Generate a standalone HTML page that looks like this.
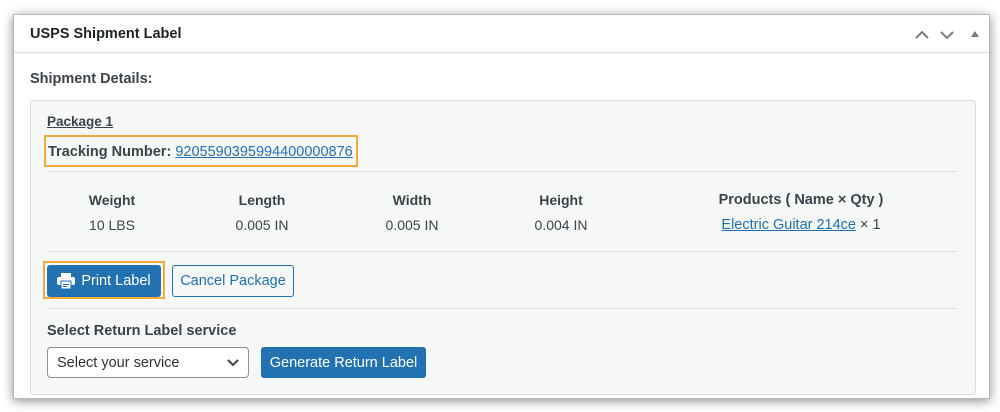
<!DOCTYPE html>
<html><head><meta charset="utf-8"><style>
*{margin:0;padding:0;box-sizing:border-box}
body{width:1000px;height:412px;background:#fff;font-family:"Liberation Sans",Arial,sans-serif;color:#1d2327;position:relative;overflow:hidden}
.a{position:absolute;white-space:nowrap}
.panel{position:absolute;left:13px;top:14px;width:977px;height:385px;background:#fff;border:1px solid #b8b9bc;box-shadow:0 2px 10px rgba(0,0,0,.45)}
.inner{position:absolute;left:30px;top:100px;width:946px;height:295px;background:#f6f7f7;border:1px solid #dcdcde;border-radius:4px}
.hr{position:absolute;left:47px;width:911px;height:1px;background:#dcdcde}
.c{position:absolute;text-align:center;width:150px;font-size:14px;color:#3c434a}
.b{font-weight:bold}
a{color:#2271b1;text-decoration:underline}
.btn{position:absolute;height:32px;border-radius:3px;font-size:14px;display:flex;align-items:center;justify-content:center}
</style></head><body>
<div class="panel"></div>
<div class="a" style="left:14px;top:52px;width:975px;height:1px;background:#dcdcde"></div>
<div class="a b" style="left:30px;top:26px;font-size:14.5px">USPS Shipment Label</div>
<svg class="a" style="left:913px;top:28px" width="70" height="14" viewBox="0 0 70 14">
<path d="M3 10 L9 4 L15 10" stroke="#787c82" stroke-width="2" fill="none"/>
<path d="M28 4 L34 10 L40 4" stroke="#787c82" stroke-width="2" fill="none"/>
<path d="M58 9 L62 3 L66 9 Z" fill="#787c82"/>
</svg>
<div class="a b" style="left:30px;top:71px;font-size:14.5px;color:#3c434a">Shipment Details:</div>
<div class="inner"></div>
<div class="a b" style="left:47px;top:114px;font-size:13.5px;text-decoration:underline;color:#3c434a">Package 1</div>
<div class="a" style="left:44px;top:135px;width:314px;height:32px;border:2px solid #f6a93b"></div>
<div class="a" style="left:48px;top:144px;font-size:14.5px"><span class="b" style="color:#3c434a">Tracking Number:</span> <a>9205590395994400000876</a></div>
<div class="hr" style="top:171px"></div>
<div class="c b" style="left:37px;top:192px">Weight</div>
<div class="c" style="left:37px;top:217px">10 LBS</div>
<div class="c b" style="left:187px;top:192px">Length</div>
<div class="c" style="left:187px;top:217px">0.005 IN</div>
<div class="c b" style="left:337px;top:192px">Width</div>
<div class="c" style="left:337px;top:217px">0.005 IN</div>
<div class="c b" style="left:486px;top:192px">Height</div>
<div class="c" style="left:486px;top:217px">0.004 IN</div>
<div class="c b" style="left:701px;top:192px;width:200px;font-size:14.5px">Products ( Name × Qty )</div>
<div class="c" style="left:701px;top:217px;width:200px;font-size:14.5px"><a>Electric Guitar 214ce</a> × 1</div>
<div class="hr" style="top:251px"></div>
<div class="a" style="left:43px;top:261px;width:122px;height:38px;border:2px solid #f6a93b"></div>
<div class="btn" style="left:47px;top:265px;width:114px;background:#2271b1;color:#fff;font-size:14.5px">
<svg width="18" height="16" viewBox="0 0 18 16" style="margin-right:6px"><rect x="4" y="0" width="10" height="4" fill="#fff"/><rect x="0" y="4" width="18" height="8" rx="2" fill="#fff"/><rect x="4" y="8" width="10" height="8" fill="#fff" stroke="#2271b1" stroke-width="1"/><rect x="6" y="11" width="6" height="1" fill="#2271b1"/><rect x="6" y="13" width="4" height="1" fill="#2271b1"/></svg>Print Label</div>
<div class="btn" style="left:172px;top:265px;width:122px;border:1px solid #2271b1;color:#2271b1;background:#f6f7f7;font-size:14.5px">Cancel Package</div>
<div class="hr" style="top:308px"></div>
<div class="a b" style="left:47px;top:323px;font-size:14.5px;color:#3c434a">Select Return Label service</div>
<div class="a" style="left:47px;top:347px;width:202px;height:31px;border:1px solid #8c8f94;border-radius:4px;background:#fff;font-size:14.5px;padding:7px 9px;color:#2c3338">Select your service
<svg style="position:absolute;right:8px;top:10px" width="14" height="10" viewBox="0 0 14 10"><path d="M2 2 L7 7 L12 2" stroke="#3c434a" stroke-width="2" fill="none"/></svg></div>
<div class="btn" style="left:261px;top:347px;width:165px;height:31px;background:#2271b1;color:#fff;font-size:14.5px">Generate Return Label</div>
</body></html>
